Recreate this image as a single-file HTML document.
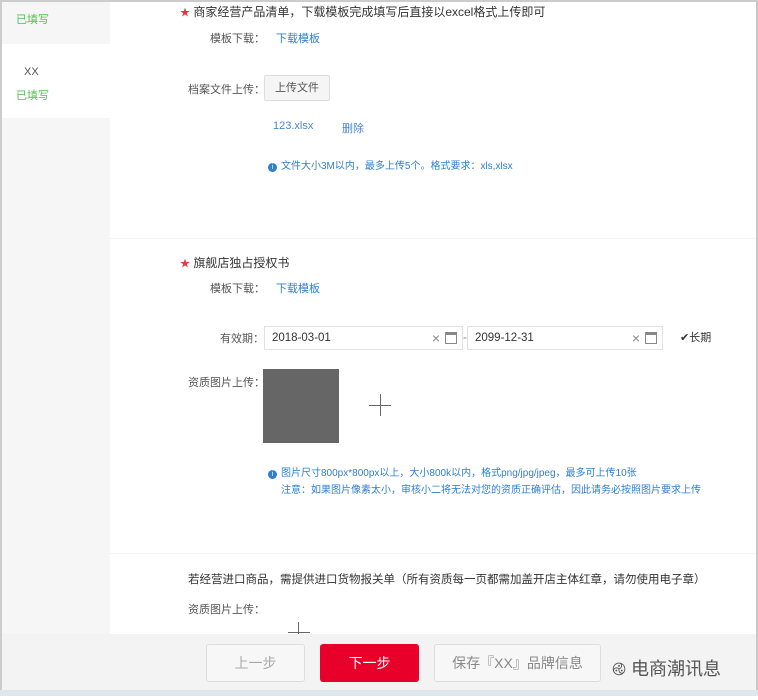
<!DOCTYPE html>
<html><head><meta charset="utf-8"><style>
*{margin:0;padding:0;box-sizing:border-box}
body{width:758px;height:696px;overflow:hidden;background:#fff;font-family:"Liberation Sans","Noto Sans CJK SC",sans-serif;font-size:12px;color:#333;position:relative}
.a{position:absolute;white-space:nowrap}
.blue{color:#2f7fd0}
.lbl{color:#555}
.star{color:#e4393c;font-size:10px}
.inp{position:absolute;height:24px;border:1px solid #e2e2e2;background:#fff;font-size:11.5px;line-height:22px;padding-left:7px;color:#333}
.btn{position:absolute;border:1px solid #ddd;border-radius:3px;text-align:center;font-size:14px}
.info{display:inline-block;width:9px;height:9px;border-radius:50%;background:#2f7fd0;color:#fff;font-size:7px;line-height:9px;text-align:center;margin-right:4px;vertical-align:0}
</style></head><body>
<div class="a" style="left:0;top:0;width:758px;height:2px;background:#ccc"></div>
<div class="a" style="left:756px;top:0;width:2px;height:696px;background:#c8c8c8"></div>
<div class="a" style="left:0;top:0;width:2px;height:696px;background:#ccc"></div>
<div class="a" style="left:2px;top:2px;width:108px;height:632px;background:#f6f6f6"></div>
<div class="a" style="left:2px;top:44px;width:108px;height:74px;background:#fff"></div>
<div class="a" style="left:16px;top:11px;color:#4cc34c;font-size:11px">已填写</div>
<div class="a" style="left:24px;top:66px;color:#555;font-size:11px">XX</div>
<div class="a" style="left:16px;top:87px;color:#4cc34c;font-size:11px">已填写</div>
<div class="a" style="left:110px;top:238px;width:646px;height:1px;background:#f3f3f3"></div>
<div class="a" style="left:110px;top:553px;width:646px;height:1px;background:#f3f3f3"></div>

<div class="a" style="left:180px;top:3px"><span class="star">★</span> 商家经营产品清单，下载模板完成填写后直接以excel格式上传即可</div>
<div class="a lbl" style="left:210px;top:30px;font-size:11px">模板下载：</div>
<div class="a blue" style="left:276px;top:30px;font-size:11px">下载模板</div>
<div class="a lbl" style="left:188px;top:81px;font-size:11px">档案文件上传：</div>
<div class="a" style="left:264px;top:75px;width:66px;height:26px;border:1px solid #ddd;background:#f5f5f5;border-radius:2px;font-size:11px;line-height:24px;text-align:center;color:#555">上传文件</div>
<div class="a" style="left:273px;top:120px;color:#4a86c6;font-size:11px">123.xlsx</div>
<div class="a" style="left:342px;top:120px;color:#4a86c6;font-size:11px">删除</div>
<div class="a blue" style="left:268px;top:157px;font-size:10px"><span class="info">i</span>文件大小3M以内，最多上传5个。格式要求：xls,xlsx</div>

<div class="a" style="left:180px;top:254px"><span class="star">★</span> 旗舰店独占授权书</div>
<div class="a lbl" style="left:210px;top:280px;font-size:11px">模板下载：</div>
<div class="a blue" style="left:276px;top:280px;font-size:11px">下载模板</div>
<div class="a lbl" style="left:220px;top:330px;font-size:11px">有效期：</div>
<div class="inp" style="left:264px;top:326px;width:199px">2018-03-01<span style="position:absolute;right:22px;color:#888;font-size:14px">×</span><span style="position:absolute;right:5px;top:5px;width:12px;height:12px;border:1px solid #888;border-top-width:3px"></span></div>
<div class="a" style="left:463px;top:330px;color:#888">-</div>
<div class="inp" style="left:467px;top:326px;width:196px">2099-12-31<span style="position:absolute;right:22px;color:#888;font-size:14px">×</span><span style="position:absolute;right:5px;top:5px;width:12px;height:12px;border:1px solid #888;border-top-width:3px"></span></div>
<div class="a" style="left:680px;top:329px;font-size:11px;color:#333">✔长期</div>
<div class="a lbl" style="left:188px;top:374px;font-size:11px">资质图片上传：</div>
<div class="a" style="left:263px;top:369px;width:76px;height:74px;background:#666"></div>
<div class="a" style="left:369px;top:405px;width:22px;height:1px;background:#666"></div>
<div class="a" style="left:380px;top:394px;width:1px;height:22px;background:#666"></div>
<div class="a blue" style="left:268px;top:464px;font-size:10px"><span class="info">i</span>图片尺寸800px*800px以上，大小800k以内，格式png/jpg/jpeg，最多可上传10张</div>
<div class="a blue" style="left:281px;top:481px;font-size:10px">注意：如果图片像素太小，审核小二将无法对您的资质正确评估，因此请务必按照图片要求上传</div>

<div class="a" style="left:188px;top:571px;font-size:11.5px">若经营进口商品，需提供进口货物报关单（所有资质每一页都需加盖开店主体红章，请勿使用电子章）</div>
<div class="a lbl" style="left:188px;top:601px;font-size:11px">资质图片上传：</div>

<div class="a" style="left:2px;top:634px;width:754px;height:56px;background:#f3f3f3"></div>
<div class="a" style="left:288px;top:632px;width:22px;height:1px;background:#666"></div>
<div class="a" style="left:298px;top:622px;width:1px;height:12px;background:#666"></div>
<div class="btn" style="left:206px;top:644px;width:99px;height:38px;line-height:36px;background:#f7f7f7;color:#aaa">上一步</div>
<div class="btn" style="left:320px;top:644px;width:99px;height:38px;line-height:38px;background:#e8002a;border:none;color:#fff">下一步</div>
<div class="btn" style="left:434px;top:644px;width:167px;height:38px;line-height:36px;background:#f7f7f7;color:#888">保存『XX』品牌信息</div>
<div class="a" style="left:612px;top:650px;font-size:18px;color:#555">࿋ 电商潮讯息</div>
<div class="a" style="left:0;top:690px;width:758px;height:6px;background:#dfe6ee"></div>
</body></html>
